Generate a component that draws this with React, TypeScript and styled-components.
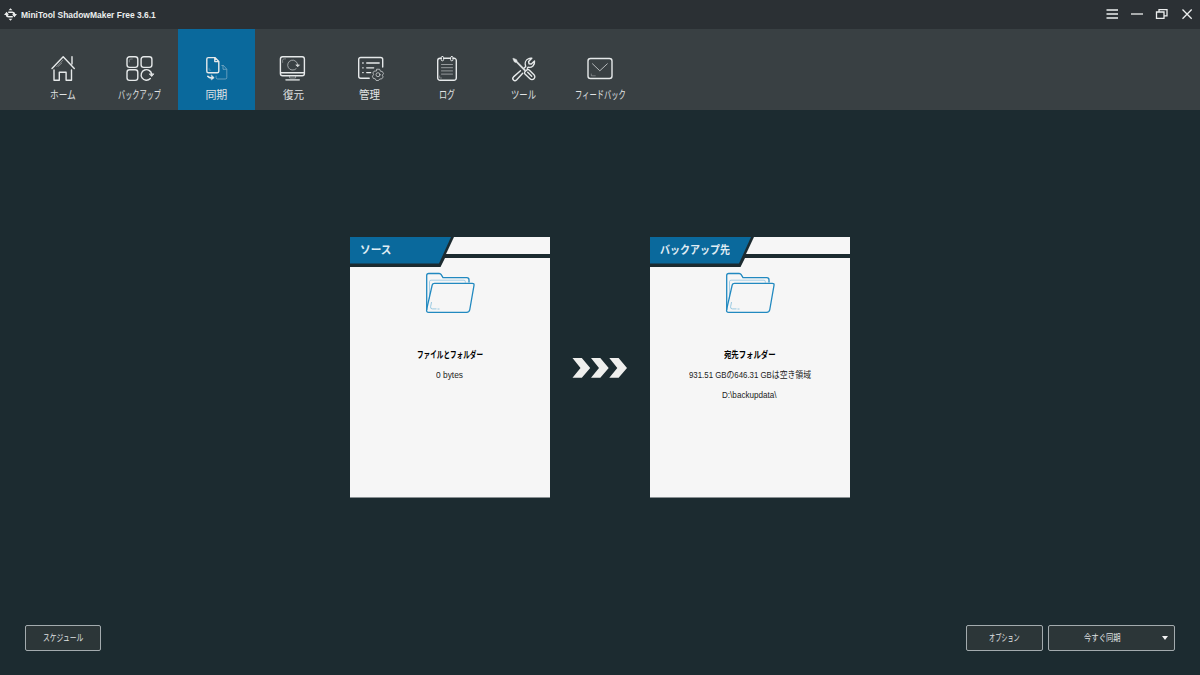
import React, { useLayoutEffect, useRef, useState } from "react";
import styled, { createGlobalStyle } from "styled-components";

const GlobalStyle = createGlobalStyle`
  * { box-sizing: border-box; }
  body { margin: 0; background: #1c2b30; }
`;

const Window = styled.div`
  width: 1200px;
  height: 675px;
  display: flex;
  flex-direction: column;
  overflow: hidden;
  background: #1c2b30;
  color: #e2e5e6;
  font-family: "Liberation Sans", "Noto Sans CJK JP", sans-serif;
`;

const TitleBar = styled.header`
  height: 29px;
  flex: none;
  display: flex;
  align-items: center;
  justify-content: space-between;
  padding: 0 6px 1px 4px;
  background: #2b3034;
`;

const Brand = styled.div`
  display: flex;
  align-items: center;
  gap: 4px;
  font-size: 9.5px;
  font-weight: 700;
  color: #eceeee;
`;

const WindowControls = styled.div`
  display: flex;
  align-items: center;
  gap: 11px;
`;

const Toolbar = styled.nav`
  height: 81px;
  flex: none;
  display: flex;
  padding-left: 24.4px;
  background: #394043;
`;

const NavItem = styled.div<{ $active?: boolean }>`
  width: 76.8px;
  display: flex;
  flex-direction: column;
  align-items: center;
  padding-top: 25px;
  font-size: 11px;
  line-height: 16px;
  background: ${(p) => (p.$active ? "#0a699c" : "transparent")};
  color: #e0e3e4;
  svg { display: block; margin-bottom: 2.5px; }
`;

const Main = styled.main`
  flex: 1;
  display: flex;
  justify-content: center;
  align-items: flex-start;
  padding-top: 127px;
`;

const Card = styled.section`
  width: 200px;
  height: 260.5px;
  color: #111;
`;

const CardTop = styled.div`
  display: flex;
  align-items: flex-start;
  height: 21px;
`;

const CardTab = styled.div`
  width: 101px;
  height: 26.5px;
  flex: none;
  padding-left: 9.5px;
  background: #0a699c;
  color: #e0edf4;
  font: 700 11px/25px "Noto Sans CJK JP", sans-serif;
  clip-path: polygon(0 0, 100% 0, 89px 100%, 0 100%);
`;

const CardStrip = styled.div`
  flex: 1;
  height: 17px;
  margin-left: -5px;
  background: #f6f6f6;
  clip-path: polygon(8px 0, 100% 0, 100% 100%, 0 100%);
`;

const CardBody = styled.div`
  height: 239.5px;
  display: flex;
  flex-direction: column;
  align-items: center;
  padding: 13px 1px 0 0;
  background: #f6f6f6;
  clip-path: polygon(0 9px, 90.5px 9px, 95px 0, 100% 0, 100% 100%, 0 100%);
  svg { display: block; margin: 0 0 30px 1px; }
`;

const CardLine = styled.div<{ $bold?: boolean }>`
  height: 20px;
  font-size: ${(p) => (p.$bold ? "9.5px" : "9px")};
  line-height: 20px;
  font-weight: ${(p) => (p.$bold ? 700 : 400)};
  color: ${(p) => (p.$bold ? "#000" : "#222")};
`;

const Arrows = styled.div`
  width: 100px;
  padding-top: 120px;
  display: flex;
  justify-content: center;
`;

const Footer = styled.footer`
  height: 50px;
  flex: none;
  display: flex;
  align-items: flex-start;
  gap: 5px;
  padding: 0 25px;
`;

const Button = styled.button<{ $width: number; $pushLeft?: boolean }>`
  width: ${(p) => p.$width}px;
  height: 26px;
  display: flex;
  align-items: center;
  justify-content: center;
  position: relative;
  margin: 0;
  margin-right: ${(p) => (p.$pushLeft ? "auto" : "0")};
  padding: 0;
  border: 1px solid #a3abae;
  border-radius: 2px;
  background: #2c3638;
  color: #e0e3e4;
  font: 400 9.5px/16px "Liberation Sans", "Noto Sans CJK JP", sans-serif;
`;

const ButtonText = styled.span<{ $shift?: number }>`
  display: flex;
  padding-right: ${(p) => p.$shift ?? 0}px;
`;

const Caret = styled.span`
  position: absolute;
  right: 6px;
  top: 10px;
  border: 3px solid transparent;
  border-top: 4px solid #f3f3f3;
  border-bottom: 0;
`;

const FitBox = styled.span<{ $width: number }>`
  display: block;
  width: ${(p) => p.$width}px;
  white-space: nowrap;
`;

const FitInner = styled.span`
  display: inline-block;
  vertical-align: top;
  transform-origin: 0 50%;
`;

function Fit({ width, children }: { width: number; children: string }) {
  const ref = useRef<HTMLSpanElement>(null);
  const [scale, setScale] = useState(1);
  useLayoutEffect(() => {
    if (ref.current) setScale(width / ref.current.offsetWidth);
  }, [width, children]);
  return (
    <FitBox $width={width}>
      <FitInner ref={ref} style={{ transform: `scaleX(${scale})` }}>
        {children}
      </FitInner>
    </FitBox>
  );
}

const Icon = ({ children, x = 0 }: { children: React.ReactNode; x?: number }) => (
  <svg width="30" height="30" viewBox={`${x} 0 30 30`} fill="none" stroke="#e6e9ea" strokeWidth="1.4" strokeLinecap="round" strokeLinejoin="round">
    {children}
  </svg>
);

const HomeIcon = () => (
  <Icon>
    <path d="M4 14.500 15.200 2.800 26.300 14.500M24 2.600v7.300M6 16V26.200h5.300v-8h6.800v8h5.400V16" />
    <path d="m8.700 12.700 6.200-6.500M10.500 12.200l3.300-3.200" strokeWidth=".7" opacity=".6" />
  </Icon>
);
const BackupIcon = () => (
  <Icon x={1.2}>
    <rect x="3.200" y="2.800" width="10.800" height="10.600" rx="2.600" />
    <rect x="17.300" y="2.800" width="10.800" height="10.600" rx="2.600" />
    <rect x="3.200" y="15.800" width="10.800" height="10.600" rx="2.600" />
    <path d="M26.500 24.600a5.300 5.300 0 1 1 1.400-4.400" />
    <path d="m25.700 20.200 2.200 2.300 2-2.300z" fill="#e6e9ea" strokeWidth=".8" />
    <path d="M5.500 8V6.500A1.800 1.800 0 0 1 7 5h1.500" strokeWidth=".6" opacity=".6" />
  </Icon>
);
const SyncIcon = () => (
  <Icon x={-0.3}>
    <path d="M7 3.600h6.600l3.900 4v9.600a1.500 1.500 0 0 1-1.500 1.500H7a1.500 1.500 0 0 1-1.500-1.500V5.100A1.500 1.500 0 0 1 7 3.600ZM13.500 3.800v3.800h3.800" />
    <path d="M7.800 14.200v2h1.700" strokeWidth=".5" opacity=".5" />
    <path d="M20.500 11.500h1.700l3.300 3.700v8.300q0 1.500-1.500 1.500h-7.700q-1.500 0-1.500-1.500V22M21.700 12v3.300h3.200" strokeWidth=".8" opacity=".5" />
    <path d="M6.500 22.300c1 1.300 2.500 1.800 4.500 1.600" strokeWidth="1.600" />
    <path d="m10.300 21.200 2.600 2.500-2.600 2z" fill="#e6e9ea" strokeWidth=".6" />
  </Icon>
);
const RestoreIcon = () => (
  <Icon x={0.9}>
    <rect x="3.300" y="2.800" width="24" height="19" rx="2.200" />
    <path d="M3.700 18.700h23.200" />
    <path d="M12.500 22v2h6v-2" strokeWidth=".8" opacity=".6" />
    <path d="M9 25.800h13" strokeWidth="1.800" opacity=".75" />
    <path d="M19 14.800a5 5 0 1 1 1.600-3.800" strokeWidth=".9" opacity=".65" />
    <path d="m19 11.200 1.700 1.500 1.400-1.500z" fill="#e6e9ea" strokeWidth=".7" />
    <path d="M5.500 8.500V6.300q0-1.400 1.500-1.400h1.500" strokeWidth=".6" opacity=".6" />
  </Icon>
);
const ManageIcon = () => (
  <Icon x={0.3}>
    <path d="M14.500 24.200H6a2 2 0 0 1-2-2V5.500a2 2 0 0 1 2-2h20a2 2 0 0 1 2 2V13" />
    <path d="M8 9h.5M8 13.800h.5M8 18.600h.5M12 9h12.500M12 13.800h7M12 18.600h4" strokeWidth="1.300" />
    <path d="m22.300 15.200 2.700.1.700 1.900 1.900.3 1.200 2.100-1.200 1.600.9 1.800-1.500 1.900-2 .1-1.200 1.500h-2.300l-.9-1.700-2-.4-.9-2.200 1.200-1.500-.7-1.800 1.300-1.800 2-.1z" strokeWidth=".9" opacity=".75" />
    <circle cx="23.300" cy="20.700" r="2" strokeWidth=".9" opacity=".75" />
  </Icon>
);
const LogIcon = () => (
  <Icon>
    <path d="M9.300 4.200H8A2.300 2.300 0 0 0 5.700 6.500V24A2.300 2.300 0 0 0 8 26.300h14A2.300 2.300 0 0 0 24.300 24V6.500A2.300 2.300 0 0 0 22 4.200h-1M12 4.200h6.400" />
    <rect x="9.200" y="2.500" width="2.400" height="4.300" rx="1.100" strokeWidth="1" />
    <rect x="18.600" y="2.500" width="2.400" height="4.300" rx="1.100" strokeWidth="1" />
    <path d="M9.500 10.500h11M9.500 13.700h11M9.500 16.900h11M9.500 20.100h11" strokeWidth=".9" opacity=".6" />
    <path d="M7.600 22v2h2" strokeWidth=".6" opacity=".6" />
  </Icon>
);
const ToolsIcon = () => (
  <Icon x={0.5}>
    <path d="M5 4.400 8 5.700l.8 2 8.200 8.400-.8.900L8 8.600 6 8 4.600 5z" fill="#e6e9ea" strokeWidth=".7" />
    <path d="m16.200 18 2-2q1.200-1 2.500 0l4.800 4.800a2.800 2.800 0 0 1-4 4L16.500 20q-.9-1-.3-2ZM19.200 18.200l4 4" />
    <path d="m12 16.800-7 6.100a2.100 2.100 0 0 0 3 3.100l6.200-6.700M17.200 12.400l-1.500 1.500M17.200 12.400c-1.200-3.100-.3-6.400 3-7.700 1-.5 2-.6 3.100-.4l-3.200 3.200.4 2.200 2.300.3 3.200-3c.6 4.100-2.500 7-6.400 6.300l-.8 1" />
  </Icon>
);
const FeedbackIcon = () => (
  <Icon>
    <rect x="3" y="4.500" width="24" height="20" rx="2.500" />
    <path d="m7.500 9.800 7.300 7 7.500-7" strokeWidth=".9" opacity=".8" />
    <path d="M6.300 20v1.800h4" strokeWidth=".7" opacity=".5" />
  </Icon>
);

const LogoIcon = () => (
  <svg width="13" height="13" viewBox="0 0 13 13" fill="#eceeee">
    <path d="M0 6.900 2.600 3.800 5 6.700H3.700Q3.800 8 5.200 8h3.600v1.500H4.500Q2 9.500 1.700 6.900Z" />
    <path d="M13 6.100l-2.600 3.100L8 6.300h1.300Q9.200 5 7.800 5H4.200V3.500h4.300q2.500 0 2.800 2.600Z" />
    <path d="m4.600 2.200 1.900-2 1.900 2zM4.600 10.800l1.900 2 1.900-2z" />
  </svg>
);

const ControlIcon = ({ d }: { d: string }) => (
  <svg width="14" height="14" viewBox="0 0 14 14" fill="none" stroke="#eceeee" strokeWidth="1.300">
    <path d={d} />
  </svg>
);

const FolderIcon = () => (
  <svg width="50" height="44" viewBox="0 0 50 44" fill="none" stroke="#2189c0" strokeWidth="1.300" strokeLinejoin="round">
    <path d="M1.700 39V4.500q0-2 2-2h10.500q1.300 0 2 1.200l1.800 3h23.800q2.200 0 2.200 2.200v2.700" />
    <path d="M4.500 28V10.700q0-1.500 1.500-1.500h33q1.300 0 1.300 1.300v1.200" stroke="#9ccbe3" strokeWidth=".9" />
    <path d="M9.500 12.300h37.700q2.200 0 1.800 2l-4.200 24.200q-.4 2.900-3.300 2.900H3.800q-2.800 0-2.100-3.200L7.200 14q.4-1.700 2.300-1.700Z" />
    <path d="m6.500 31-.9 4.800q-.3 2.100 1.700 2.100h4.200M12.500 38h2" stroke="#8fc4df" strokeWidth=".9" />
  </svg>
);

const ArrowsIcon = () => (
  <svg width="56" height="22" viewBox="0 0 56 22" fill="#efefed">
    {[0.5, 19, 37.3].map((x) => (
      <path key={x} transform={`translate(${x} 0)`} d="M0 1h9.300L17.700 11 9.300 20.800H0L8 11Z" />
    ))}
  </svg>
);

const navItems = [
  { label: "ホーム", width: 26, icon: <HomeIcon /> },
  { label: "バックアップ", width: 43, icon: <BackupIcon /> },
  { label: "同期", width: 22, icon: <SyncIcon />, active: true },
  { label: "復元", width: 21, icon: <RestoreIcon /> },
  { label: "管理", width: 21, icon: <ManageIcon /> },
  { label: "ログ", width: 16, icon: <LogIcon /> },
  { label: "ツール", width: 25, icon: <ToolsIcon /> },
  { label: "フィードバック", width: 51, icon: <FeedbackIcon /> },
];

interface FolderCardProps {
  title: string;
  titleWidth: number;
  lines: { text: string; width: number; bold?: boolean }[];
}

function FolderCard({ title, titleWidth, lines }: FolderCardProps) {
  return (
    <Card>
      <CardTop>
        <CardTab>
          <Fit width={titleWidth}>{title}</Fit>
        </CardTab>
        <CardStrip />
      </CardTop>
      <CardBody>
        <FolderIcon />
        {lines.map((line) => (
          <CardLine key={line.text} $bold={line.bold}>
            <Fit width={line.width}>{line.text}</Fit>
          </CardLine>
        ))}
      </CardBody>
    </Card>
  );
}

export default function App() {
  return (
    <Window>
      <GlobalStyle />
      <TitleBar>
        <Brand>
          <LogoIcon />
          <Fit width={134.5}>MiniTool ShadowMaker Free 3.6.1</Fit>
        </Brand>
        <WindowControls>
          <ControlIcon d="M1.500 3h11.500M1.500 7h11.500M1.500 11h11.500" />
          <ControlIcon d="M1 7h12" />
          <ControlIcon d="M1.500 5h7.500v6.300H1.500zM4 5V2.600h8v6.200H9" />
          <ControlIcon d="m2.500 2.500 9.200 9.200M11.700 2.500 2.500 11.700" />
        </WindowControls>
      </TitleBar>
      <Toolbar>
        {navItems.map((item) => (
          <NavItem key={item.label} $active={item.active}>
            {item.icon}
            <Fit width={item.width}>{item.label}</Fit>
          </NavItem>
        ))}
      </Toolbar>
      <Main>
        <FolderCard
          title="ソース"
          titleWidth={31}
          lines={[
            { text: "ファイルとフォルダー", width: 66, bold: true },
            { text: "0 bytes", width: 27 },
          ]}
        />
        <Arrows>
          <ArrowsIcon />
        </Arrows>
        <FolderCard
          title="バックアップ先"
          titleWidth={70}
          lines={[
            { text: "宛先フォルダー", width: 52, bold: true },
            { text: "931.51 GBの646.31 GBは空き領域", width: 122 },
            { text: "D:\\backupdata\\", width: 55 },
          ]}
        />
      </Main>
      <Footer>
        <Button $width={76} $pushLeft>
          <Fit width={40}>スケジュール</Fit>
        </Button>
        <Button $width={77}>
          <Fit width={31}>オプション</Fit>
        </Button>
        <Button $width={127}>
          <ButtonText $shift={18}>
            <Fit width={37}>今すぐ同期</Fit>
          </ButtonText>
          <Caret />
        </Button>
      </Footer>
    </Window>
  );
}
